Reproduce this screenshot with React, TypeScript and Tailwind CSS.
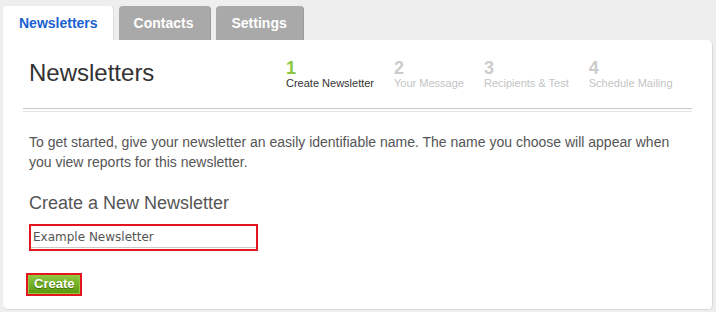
const steps = [
  { n: "1", label: "Create Newsletter", active: true },
  { n: "2", label: "Your Message", active: false },
  { n: "3", label: "Recipients & Test", active: false },
  { n: "4", label: "Schedule Mailing", active: false },
];

export default function App() {
  return (
    <div className="h-[312px] w-full bg-[#eeeeee] pl-[3px] pr-[3px] pt-[6px] font-['Liberation_Sans',Arial,sans-serif]">
      {/* tabs */}
      <div className="flex gap-[5px]">
        <div className="h-[34px] rounded-t-[4px] border-r border-[#dcdcdc] bg-white pl-4 pr-[15px] text-[14px] font-bold leading-[34px] text-[#1b5fd1]">
          Newsletters
        </div>
        <div className="h-[34px] rounded-t-[4px] border-r border-[#9a9a9a] bg-[#a9a9a9] pl-[15px] pr-4 text-[14px] font-bold leading-[34px] text-white">
          Contacts
        </div>
        <div className="h-[34px] rounded-t-[4px] border-r border-[#9a9a9a] bg-[#a9a9a9] pl-4 pr-4 text-[14px] font-bold leading-[34px] text-white">
          Settings
        </div>
      </div>

      {/* panel */}
      <div className="h-[270px] rounded-b-[5px] rounded-tr-[5px] border-r border-b border-[#d8d8d8] bg-white px-5 pt-[19px]">
        <div className="flex h-[49px] items-start pl-[6px]">
          <h1 className="w-[257px] text-[24px] leading-[28px] text-[#333]">Newsletters</h1>
          <div className="mt-px flex gap-5">
            {steps.map((s) => (
              <div key={s.n} className="flex flex-col">
                <span
                  className={
                    s.active
                      ? "text-[18px] font-bold leading-[17px] text-[#8dc63f]"
                      : "text-[18px] font-bold leading-[17px] text-[#cccccc]"
                  }
                >
                  {s.n}
                </span>
                <span
                  className={
                    s.active
                      ? "text-[11px] leading-[13px] text-[#333]"
                      : "text-[11px] leading-[13px] text-[#c4c4c4]"
                  }
                >
                  {s.label}
                </span>
              </div>
            ))}
          </div>
        </div>

        <div className="h-[4px] border-t border-b border-t-[#c8c8c8] border-b-[#e6e6e6]"></div>

        <div className="pl-[6px]">
          <p className="mt-5 text-[14px] leading-[20px] text-[#555]">
            To get started, give your newsletter an easily identifiable name. The name you choose will appear when
            you view reports for this newsletter.
          </p>

          <h2 className="mt-[21px] text-[18px] leading-[20px] text-[#555]">Create a New Newsletter</h2>

          <div className="mt-[11px] w-[229px] border-2 border-[#e3161f] pb-px">
            <input
              className="block h-[22px] w-full border-b border-[#cccccc] bg-white px-[2px] font-['DejaVu_Sans',Verdana,sans-serif] text-[12px] text-[#555] outline-none"
              defaultValue="Example Newsletter"
            />
          </div>

          <div className="ml-[-3px] mt-[22px] inline-block border-2 border-[#e3161f]">
            <button className="block h-[19px] border border-[#93c83f] bg-gradient-to-b from-[#8cc63e] to-[#5c990c] px-[5px] pb-[2px] text-[13px] font-bold leading-[14px] text-white [text-shadow:0_1px_1px_#3d6a05]">
              Create
            </button>
          </div>
        </div>
      </div>
    </div>
  );
}
